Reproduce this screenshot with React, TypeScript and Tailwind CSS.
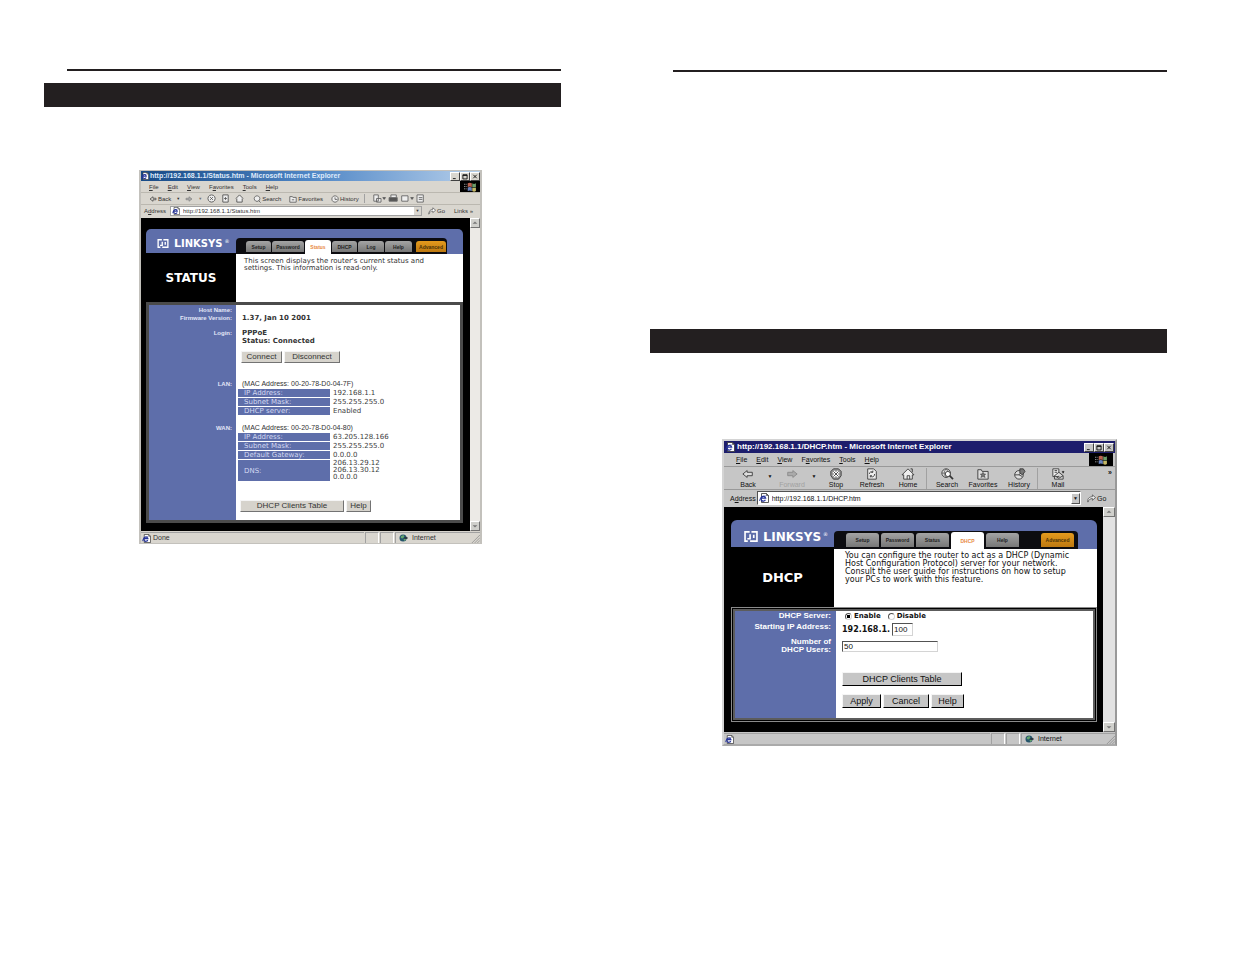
import type { ReactNode } from "react";

interface TabItem {
  name: string;
  width: string;
  active?: boolean;
  advanced?: boolean;
}

const statusTabs: TabItem[] = [
  { name: "Setup", width: "w-[25px]" },
  { name: "Password", width: "w-8" },
  { name: "Status", width: "w-[26px]", active: true },
  { name: "DHCP", width: "w-[25px]" },
  { name: "Log", width: "w-[26px]" },
  { name: "Help", width: "w-[27px]" },
  { name: "Advanced", width: "w-[30px] ml-[3px]", advanced: true },
];

const dhcpTabs: TabItem[] = [
  { name: "Setup", width: "w-[33px]" },
  { name: "Password", width: "w-[33px]" },
  { name: "Status", width: "w-[33px]" },
  { name: "DHCP", width: "w-[33px]", active: true },
  { name: "Help", width: "w-[33px]" },
  { name: "Advanced", width: "w-[33px] ml-[20px]", advanced: true },
];

const menus = [
  ["", "F", "ile"],
  ["", "E", "dit"],
  ["", "V", "iew"],
  ["F", "a", "vorites"],
  ["", "T", "ools"],
  ["", "H", "elp"],
];

const Menu = () => (
  <div className="flex gap-[9px]">
    {menus.map(([before, key, after]) => (
      <button key={key + after}>
        {before}
        <u>{key}</u>
        {after}
      </button>
    ))}
  </div>
);

const PageIcon = ({ className }: { className: string }) => (
  <svg viewBox="0 0 10 10" className={`shrink-0 ${className}`}>
    <path d="M2.500 .5h5L9.500 2.500v7h-7z" fill="#fff" stroke="#333" strokeWidth=".8" />
    <path d="M7.500 .5v2h2" fill="none" stroke="#333" strokeWidth=".7" />
    <path d="M6.400 6.800A2.400 2.400 0 1 1 6.600 5.200H2" fill="none" stroke="#26349a" strokeWidth="1.300" />
    <path d="M.3 8C1 4.500 4 2.600 6.800 3" fill="none" stroke="#26349a" strokeWidth=".7" />
  </svg>
);

const WindowsFlag = ({ className }: { className: string }) => (
  <div className={`bg-black flex items-center justify-center ${className}`}>
    <svg viewBox="0 0 14 11" className="h-[10px] w-[14px]">
      <path d="M4.500 1.500c1.500-.8 3-.8 4.500 0v4c-1.500-.8-3-.8-4.500 0z" fill="#b96350" />
      <path d="M9.500 1.500c1.500.8 2.500.8 4 0v4c-1.500.8-2.500.8-4 0z" fill="#6d9d69" />
      <path d="M4.500 6c1.500-.8 3-.8 4.500 0v4c-1.500-.8-3-.8-4.500 0z" fill="#6a83bd" />
      <path d="M9.500 6c1.500.8 2.500.8 4 0v4c-1.500.8-2.500.8-4 0z" fill="#c5b867" />
      <path d="M.5 2.500H4M.5 5H4M.5 7.500H4" stroke="#aaa" strokeWidth="1" strokeDasharray="1 .7" />
    </svg>
  </div>
);

const WindowButtons = ({ className }: { className: string }) => (
  <div className="ml-auto flex">
    {["M2 8h4", "M2 2.500h6v6H2zM2 3.500h6", "M2.500 2.500l5 5M7.500 2.500l-5 5"].map((d, i) => (
      <button
        key={d}
        aria-label={["Minimize", "Maximize", "Close"][i]}
        className={`border border-t-white border-l-white border-r-neutral-700 border-b-neutral-700 ${className}`}
      >
        <svg viewBox="0 0 10 10" className="h-full w-full" fill="none" stroke="#111" strokeWidth="1.300">
          <path d={d} />
        </svg>
      </button>
    ))}
  </div>
);

const ScrollBar = ({ className }: { className: string }) => (
  <div className={`shrink-0 flex flex-col justify-between ${className}`}>
    {["M2 6l3-3 3 3z", "M2 4l3 3 3-3z"].map((d, i) => (
      <button
        key={d}
        aria-label={i === 0 ? "Scroll up" : "Scroll down"}
        className="h-[10px] bg-[#d0d0cc] border border-t-white border-l-white border-r-neutral-500 border-b-neutral-500"
      >
        <svg viewBox="0 0 10 10" className="h-full w-full" fill="#777">
          <path d={d} />
        </svg>
      </button>
    ))}
  </div>
);

const Globe = () => (
  <svg viewBox="0 0 10 9" className="h-2 w-[9px]">
    <circle cx="4.500" cy="4.500" r="4" fill="#25546b" />
    <path d="M2 2.500L5 1l1 2-2 2-2-.5zM5 6l2-1 1 1-2 2z" fill="#64a56e" />
    <path d="M6 3.500h3.500v2H6z" fill="#29323c" />
  </svg>
);

const StatusBar = ({ text, right }: { text: string; right: string }) => (
  <div className="h-3 flex gap-px pt-px text-[7px] leading-[10px] font-['Liberation_Sans',sans-serif]">
    <div className="flex items-center gap-0.5 flex-1 pl-px border-t border-neutral-400">
      <PageIcon className="size-[9px]" />
      {text}
    </div>
    <div className="w-[14px] border-t border-l border-neutral-400 border-r border-r-white" />
    <div className="w-[14px] border-t border-l border-neutral-400 border-r border-r-white" />
    <div className={`flex items-center gap-1 pl-[3px] border-t border-l border-neutral-400 ${right}`}>
      <Globe />
      Internet
      <svg viewBox="0 0 10 10" className="ml-auto size-[9px]" stroke="#888" strokeWidth=".8">
        <path d="M1 10l9-9M4 10l6-6M7 10l3-3" />
      </svg>
    </div>
  </div>
);

const Logo = ({ mark, big, small }: { mark: string; big: string; small: string }) => (
  <div className="flex items-center gap-[5px] text-white font-bold">
    <svg viewBox="0 0 15 12" className={`shrink-0 ${mark}`} fill="none" stroke="#fff" strokeWidth="1.800">
      <path d="M6 1H1v10h3M6.500 3.500v5H3.500" />
      <path d="M8 1h6v10H6.500M10.500 4v3.500" />
    </svg>
    <span className={`leading-none ${big}`}>
      L<span className={small}>INKSYS</span>
    </span>
    <span className="text-[5px] leading-none -ml-[3px] mb-1 font-normal">®</span>
  </div>
);

const Tabs = ({ items, className, tabHeight }: { items: TabItem[]; className: string; tabHeight: string }) => (
  <nav className={`flex items-end bg-[#0c0c10] rounded-t-[4px] ${className}`}>
    {items.map((tab) => (
      <a
        key={tab.name}
        href="#"
        className={`flex items-center justify-center rounded-t-[3px] font-bold text-[5px] leading-[6px] font-['Liberation_Sans',sans-serif] ${tab.width} ${
          tab.active
            ? "bg-white text-[#e88a45] self-stretch"
            : tab.advanced
              ? `bg-linear-to-b from-[#e49a1d] to-[#bd7911] text-[#4b3207] mb-0.5 ${tabHeight}`
              : `bg-linear-to-b from-[#a4a4a4] to-[#777] text-[#222] mb-0.5 ${tabHeight}`
        }`}
      >
        {tab.name}
      </a>
    ))}
  </nav>
);

const Button = ({ className, children }: { className: string; children: ReactNode }) => (
  <button
    className={`border border-t-neutral-100 border-l-neutral-100 flex items-center justify-center font-['Liberation_Sans',sans-serif] ${className}`}
  >
    {children}
  </button>
);

const InfoTable = ({ rows }: { rows: [string, string[]][] }) => (
  <table className="border-separate border-spacing-x-0 border-spacing-y-px text-[7px] leading-[8px] text-neutral-700">
    <tbody>
      {rows.map(([name, values]) => (
        <tr key={name}>
          <th className="w-[92px] p-0 pl-[6px] bg-[#5e6eaa] text-[#d3d9f2] text-left font-normal">{name}</th>
          <td className={`p-0 pl-[3px] ${values.length > 1 ? "leading-[7px]" : ""}`}>
            {values.map((value) => (
              <div key={value}>{value}</div>
            ))}
          </td>
        </tr>
      ))}
    </tbody>
  </table>
);

const StatusRow = ({ labels, className, children }: { labels: string[]; className: string; children: ReactNode }) => (
  <div className="flex text-[7px] leading-[8px]">
    <div
      className={`w-[87px] shrink-0 pr-1 bg-[#5e6eaa] text-[6px] text-[#e3e7f7] text-right font-bold leading-[8px] font-['Liberation_Sans',sans-serif] ${className}`}
    >
      {labels.map((label) => (
        <div key={label}>{label}</div>
      ))}
    </div>
    <div className={`flex-1 pl-[2px] ${className}`}>{children}</div>
  </div>
);

const smallIcons = [
  "M5 1a4 4 0 1 0 .1 0M3.500 3.500l3 3M6.500 3.500l-3 3",
  "M2 1h6v8H2zM3.500 5h3M5 3.500v3",
  "M1 5l4-4 4 4M2 5v4h6V5",
];

const StatusWindow = () => (
  <section className="mt-[63px] ml-[95px] mr-[79px] border-x-2 border-y border-[#c3c1bc] bg-[#d9d6cf] text-[#333] font-['DejaVu_Sans',Verdana,sans-serif]">
    <header className="h-[10px] flex items-center gap-px bg-linear-to-r from-[#174a86] via-[#4f86c5] to-[#b6cfea] text-white">
      <PageIcon className="size-[8px]" />
      <span className="font-bold text-[7px] leading-[10px] text-[#dfeafa] font-['Liberation_Sans',sans-serif] whitespace-nowrap">
        http://192.168.1.1/Status.htm - Microsoft Internet Explorer
      </span>
      <WindowButtons className="w-[10px] h-[9px] bg-[#d9d6cf]" />
    </header>
    <div className="font-['Liberation_Sans',sans-serif] text-[6px] leading-[10px]">
      <div className="h-3 flex items-center pl-2 border-b border-[#bbb8b0]">
        <Menu />
        <WindowsFlag className="ml-auto w-5 h-[11px]" />
      </div>
      <div className="h-3 flex items-center pl-2 gap-[5px] border-b border-[#bbb8b0]">
        <button className="flex items-center gap-px">
          <svg viewBox="0 0 10 8" className="w-2 h-[6px]" fill="none" stroke="#444" strokeWidth="1">
            <path d="M5 1L1 4l4 3V5h4V3H5z" />
          </svg>
          Back
        </button>
        <span className="text-[4px]">▼</span>
        <svg viewBox="0 0 10 8" className="w-2 h-[6px]" fill="#aaa" stroke="#888">
          <path d="M5 1l4 3-4 3V5H1V3h4z" />
        </svg>
        <span className="text-[4px] text-neutral-500">▼</span>
        {smallIcons.map((d) => (
          <svg key={d} viewBox="0 0 10 10" className="size-[9px]" fill="#eee" stroke="#555" strokeWidth="1">
            <path d={d} />
          </svg>
        ))}
        <div className="flex gap-2 pl-1">
          {["Search", "Favorites", "History"].map((name, i) => (
            <button key={name} className="flex items-center gap-px">
              <svg viewBox="0 0 10 10" className="size-2" fill="#eee" stroke="#555" strokeWidth="1">
                <path
                  d={["M5 1a3.500 3.500 0 1 0 .1 0M7 7l2.500 2.500", "M1 2h3l1 1h4v6H1zM3.500 6h3", "M5 1a4 4 0 1 0 .1 0M5 3v2.500h3"][i]}
                />
              </svg>
              {name}
            </button>
          ))}
        </div>
        <span className="h-[9px] w-px bg-neutral-400" />
        <svg viewBox="0 0 60 10" className="w-[58px] h-[9px]" fill="#eee" stroke="#666" strokeWidth="1">
          <path d="M2 1h5v7H2zM5 5h5v4H5z" />
          <path d="M12 4l1.500 2L15 4z" fill="#333" />
          <path d="M19 4h9v4h-9z" fill="#555" />
          <path d="M21 1h6v3h-6z" />
          <path d="M33 2h7v6h-7z" />
          <path d="M43 4l1.500 2L46 4z" fill="#333" />
          <path d="M50 1h7v8h-7zM52 4h4M52 6h4" />
        </svg>
      </div>
      <div className="h-[13px] flex items-center pl-[3px] pb-px">
        <label htmlFor="status-address">
          A<u>d</u>dress
        </label>
        <div className="ml-1 flex flex-1 items-center gap-[3px] h-[10px] pl-px bg-white border border-neutral-400">
          <PageIcon className="size-[8px]" />
          <input id="status-address" defaultValue="http://192.168.1.1/Status.htm" className="min-w-0 flex-1 outline-none" />
          <button aria-label="Show addresses" className="w-[7px] h-2 bg-[#d9d6cf] text-[4px] leading-[8px]">
            ▼
          </button>
        </div>
        <button className="flex items-center gap-px w-[32px] pl-[6px]">
          <svg viewBox="0 0 10 10" className="size-2" fill="#fff" stroke="#666">
            <path d="M1 9c0-4 2-6 5-6V1l3.500 3L6 7V5C4 5 2 6 1 9z" />
          </svg>
          Go
        </button>
        <span className="w-[26px]">Links »</span>
      </div>
    </div>
    <div className="flex">
      <div className="flex-1 bg-black pt-[11px] pb-2 pl-[5px] pr-[7px]">
        <div className="h-[25px] flex items-end bg-[#5e6eaa] rounded-t-[5px]">
          <div className="w-[90px] shrink-0 self-stretch pl-[11px] pt-[4px] flex items-center border-b border-black">
            <Logo mark="w-3 h-[9px]" big="text-[11px]" small="text-[10px]" />
          </div>
          <Tabs items={statusTabs} className="h-4 gap-px pl-[10px] pr-px pt-0.5" tabHeight="h-[11px]" />
        </div>
        <div className="flex h-12">
          <h1 className="w-[90px] shrink-0 flex items-center justify-center text-white font-bold text-[12px]">STATUS</h1>
          <p className="flex-1 bg-white pt-1 pl-2 text-[7px] leading-[7px]">
            This screen displays the router's current status and
            <br />
            settings. This information is read-only.
          </p>
        </div>
        <div className="border-[3px] border-[#4b4b4b] bg-white">
          <StatusRow labels={["Host Name:", "Firmware Version:"]} className="pt-px">
            <p className="pt-2 pl-1 font-bold">1.37, Jan 10 2001</p>
          </StatusRow>
          <StatusRow labels={["Login:"]} className="pt-[7px] pb-[13px]">
            <p className="pl-1 font-bold">PPPoE</p>
            <p className="pl-1 font-bold">Status: Connected</p>
            <div className="mt-[6px] pl-[3px] flex gap-[2px]">
              <Button className="w-[41px] h-3 text-[8px] bg-[#d6d3cc] border-r-neutral-500 border-b-neutral-500">Connect</Button>
              <Button className="w-14 h-3 text-[8px] bg-[#d6d3cc] border-r-neutral-500 border-b-neutral-500">Disconnect</Button>
            </div>
          </StatusRow>
          <StatusRow labels={["LAN:"]} className="pt-1">
            <p className="pl-1 font-['Liberation_Sans',sans-serif]">(MAC Address: 00-20-78-D0-04-7F)</p>
            <InfoTable
              rows={[
                ["IP Address:", ["192.168.1.1"]],
                ["Subnet Mask:", ["255.255.255.0"]],
                ["DHCP server:", ["Enabled"]],
              ]}
            />
          </StatusRow>
          <StatusRow labels={["WAN:"]} className="pt-2 pb-2">
            <p className="pl-1 font-['Liberation_Sans',sans-serif]">(MAC Address: 00-20-78-D0-04-80)</p>
            <InfoTable
              rows={[
                ["IP Address:", ["63.205.128.166"]],
                ["Subnet Mask:", ["255.255.255.0"]],
                ["Default Gateway:", ["0.0.0.0"]],
                ["DNS:", ["206.13.29.12", "206.13.30.12", "0.0.0.0"]],
              ]}
            />
            <div className="mt-[18px] pl-[2px] flex gap-[2px]">
              <Button className="w-[104px] h-3 text-[8px] bg-[#d6d3cc] border-r-neutral-500 border-b-neutral-500">
                DHCP Clients Table
              </Button>
              <Button className="w-[25px] h-3 text-[8px] bg-[#d6d3cc] border-r-neutral-500 border-b-neutral-500">Help</Button>
            </div>
          </StatusRow>
        </div>
      </div>
      <ScrollBar className="w-[10px] bg-[#eceae6]" />
    </div>
    <StatusBar text="Done" right="w-[85px]" />
  </section>
);

const ToolButton = ({ name, faded, children }: { name: string; faded?: boolean; children: ReactNode }) => (
  <button className={`w-9 shrink-0 flex flex-col items-center ${faded ? "text-neutral-400" : ""}`}>
    <svg viewBox="0 0 16 14" className="w-[14px] h-3" fill="none" stroke={faded ? "#888" : "#333"} strokeWidth="1">
      {children}
    </svg>
    {name}
  </button>
);

const Caret = () => <span className="w-2 shrink-0 pt-1 text-center text-[5px]">▼</span>;

const FieldRow = ({ label, className, children }: { label: ReactNode; className: string; children: ReactNode }) => (
  <div className="flex">
    <div
      className={`w-[101px] shrink-0 pr-[5px] bg-[#5e6eaa] text-white text-right text-[8px] font-bold leading-[8px] font-['Liberation_Sans',sans-serif] ${className}`}
    >
      {label}
    </div>
    <div className={`flex-1 pl-[6px] flex items-center font-bold ${className}`}>{children}</div>
  </div>
);

const Radio = ({ label, checked }: { label: string; checked?: boolean }) => (
  <label className="flex items-center gap-[2px] ml-[3px] mr-[4px] text-[7px]">
    <input
      type="radio"
      name="dhcp-server"
      defaultChecked={checked}
      className="appearance-none size-[7px] rounded-full border border-neutral-600 border-r-neutral-300 border-b-neutral-300 bg-white checked:bg-[radial-gradient(#000_40%,#fff_50%)]"
    />
    {label}
  </label>
);

const DhcpWindow = () => (
  <section className="mt-[86px] ml-[72px] mr-[50px] border-2 border-[#d4d4d4] border-r-[#999] border-b-[#aaa] bg-[#c6c6c6] text-[#111] font-['DejaVu_Sans',Verdana,sans-serif]">
    <header className="h-3 flex items-center gap-[2px] pl-px pr-px bg-[#1d1d6c] text-white">
      <PageIcon className="size-[10px]" />
      <span className="font-bold text-[8px] leading-[12px] font-['Liberation_Sans',sans-serif] whitespace-nowrap">
        http://192.168.1.1/DHCP.htm - Microsoft Internet Explorer
      </span>
      <WindowButtons className="w-[10px] h-[9px] bg-[#c6c6c6]" />
    </header>
    <div className="font-['Liberation_Sans',sans-serif] text-[7px] leading-[9px]">
      <div className="h-[14px] flex items-center pl-3 pr-0.5 border-b border-[#999]">
        <Menu />
        <WindowsFlag className="ml-auto w-6 h-[13px]" />
      </div>
      <div className="h-[23px] flex pl-[6px] pt-px border-b border-[#999]">
        <ToolButton name="Back">
          <path d="M7 3L2 7l5 4V9h6V5H7z" fill="#ddd" />
        </ToolButton>
        <Caret />
        <ToolButton name="Forward" faded>
          <path d="M9 3l5 4-5 4V9H3V5h6z" fill="#aaa" />
        </ToolButton>
        <Caret />
        <ToolButton name="Stop">
          <path d="M5 1h6l3 3v5l-3 4H5L2 9V4z" fill="#999" />
          <path d="M5 4l6 6M11 4l-6 6" stroke="#fff" strokeWidth="3" />
          <path d="M5 4l6 6M11 4l-6 6" />
        </ToolButton>
        <ToolButton name="Refresh">
          <path d="M3 1h7l3 3v9H3z" fill="#eee" />
          <path d="M5 7c0-3 3-3 4-2M9 3v2H7M11 7c0 4-4 4-5 2M6 11V9h2" />
        </ToolButton>
        <ToolButton name="Home">
          <path d="M1 8l7-7 7 7H13v5H3V8z" fill="#eee" />
          <path d="M7 13V9h3v4M11 1h2v4" />
        </ToolButton>
        <span className="w-[3px] border-l border-neutral-400" />
        <ToolButton name="Search">
          <circle cx="7" cy="6" r="5" fill="#ddd" />
          <path d="M2 6h10M7 1c-3 3-3 7 0 10M7 1c3 3 3 7 0 10" strokeWidth=".6" />
          <circle cx="9" cy="7" r="3" fill="#fff" />
          <path d="M11 9l4 4" strokeWidth="2" />
        </ToolButton>
        <ToolButton name="Favorites">
          <path d="M2 2h4l1 2h7v9H2z" fill="#ddd" />
          <path d="M8 5l1 2h2L9.500 9l1 2L8 10l-2.500 1 1-2L5 7h2z" fill="#777" strokeWidth=".6" />
        </ToolButton>
        <ToolButton name="History">
          <circle cx="8" cy="8" r="5" fill="#ddd" />
          <path d="M3 8h5l5-6M8 8l4 2" />
          <path d="M9 1h4l2 3-3 4-3-2z" fill="#777" />
        </ToolButton>
        <span className="w-[3px] border-l border-neutral-400" />
        <ToolButton name="Mail">
          <path d="M2 1h7v9H2z" fill="#eee" />
          <path d="M4 3h3M4 5h3" />
          <path d="M4 13V9l5-4 5 4v4zM4 9l5 3 5-3" fill="#ddd" />
          <path d="M13 4l1 2 1-2z" fill="#333" />
        </ToolButton>
        <span className="ml-auto pr-[3px] font-bold">»</span>
      </div>
      <div className="h-[17px] flex items-center pl-[6px] pb-px">
        <label htmlFor="dhcp-address">
          A<u>d</u>dress
        </label>
        <div className="ml-px flex flex-1 items-center gap-[3px] h-[14px] pl-px bg-white border border-neutral-600 border-r-white border-b-white">
          <PageIcon className="size-[10px]" />
          <input id="dhcp-address" defaultValue="http://192.168.1.1/DHCP.htm" className="min-w-0 flex-1 outline-none" />
          <button
            aria-label="Show addresses"
            className="w-[9px] h-[11px] bg-[#c6c6c6] border border-r-neutral-600 border-b-neutral-600 border-t-white border-l-white text-[5px] leading-[9px]"
          >
            ▼
          </button>
        </div>
        <button className="flex items-center gap-px w-[34px] pl-[6px]">
          <svg viewBox="0 0 10 10" className="size-[9px]" fill="#eee" stroke="#444" strokeWidth=".8">
            <path d="M1 9c-1-4 2-6 5-6V1l3.500 3L6 7V5C4 5 2 6 1 9z" />
          </svg>
          Go
        </button>
      </div>
    </div>
    <div className="flex">
      <div className="flex-1 bg-black pt-[13px] pb-[10px] pl-[7px] pr-[6px]">
        <div className="h-[29px] flex items-end bg-[#5e6eaa] rounded-t-[6px]">
          <div className="w-[103px] shrink-0 self-stretch pl-[13px] pt-[5px] flex items-center border-b-2 border-black">
            <Logo mark="w-[14px] h-[11px]" big="text-[13px]" small="text-[12px]" />
          </div>
          <Tabs items={dhcpTabs} className="h-[18px] gap-0.5 pl-3 pr-1 pt-px" tabHeight="h-[14px]" />
        </div>
        <div className="flex h-[58px]">
          <h1 className="w-[103px] shrink-0 flex items-center justify-center text-white font-bold text-[13px]">DHCP</h1>
          <p className="flex-1 bg-white pt-[3px] pl-[11px] text-[8px] leading-[8px]">
            You can configure the router to act as a DHCP (Dynamic
            <br />
            Host Configuration Protocol) server for your network.
            <br />
            Consult the user guide for instructions on how to setup
            <br />
            your PCs to work with this feature.
          </p>
        </div>
        <div className="border border-[#8a8a8a] p-px">
          <form className="border-2 border-[#5c5c5c] bg-white text-[8px] leading-[8px]" onSubmit={(e) => e.preventDefault()}>
            <FieldRow label="DHCP Server:" className="pt-px">
              <Radio label="Enable" checked />
              <Radio label="Disable" />
            </FieldRow>
            <FieldRow label={<label htmlFor="start-ip">Starting IP Address:</label>} className="pt-[3px]">
              192.168.1.
              <input
                id="start-ip"
                defaultValue="100"
                className="ml-0.5 w-[21px] h-[13px] pl-px border border-neutral-600 border-r-neutral-300 border-b-neutral-300 font-normal text-[8px] font-['Liberation_Sans',sans-serif]"
              />
            </FieldRow>
            <FieldRow
              label={
                <label htmlFor="dhcp-users">
                  Number of
                  <br />
                  DHCP Users:
                </label>
              }
              className="pt-0.5"
            >
              <input
                id="dhcp-users"
                defaultValue="50"
                className="w-24 h-[11px] pl-px border border-neutral-600 border-r-neutral-300 border-b-neutral-300 font-normal text-[8px] font-['Liberation_Sans',sans-serif]"
              />
            </FieldRow>
            <div className="flex">
              <div className="w-[101px] shrink-0 bg-[#5e6eaa]" />
              <div className="flex-1 pt-[18px] pb-[10px] pl-[6px]">
                <Button className="w-[120px] h-[14px] text-[9px] bg-[#c6c6c6] border-r-black border-b-black">
                  DHCP Clients Table
                </Button>
                <div className="mt-2 flex gap-0.5">
                  <Button className="w-[39px] h-[14px] text-[9px] bg-[#c6c6c6] border-r-black border-b-black">Apply</Button>
                  <Button className="w-[46px] h-[14px] text-[9px] bg-[#c6c6c6] border-r-black border-b-black">Cancel</Button>
                  <Button className="w-[33px] h-[14px] text-[9px] bg-[#c6c6c6] border-r-black border-b-black">Help</Button>
                </div>
              </div>
            </div>
          </form>
        </div>
      </div>
      <ScrollBar className="w-3 bg-[#e2e2e2]" />
    </div>
    <StatusBar text="" right="w-[94px]" />
  </section>
);

const App = () => {
  return (
    <main className="min-h-screen bg-white grid grid-cols-2 gap-[89px] pl-11 pr-[68px] pb-10">
      <div className="pt-[69px]">
        <hr className="ml-[23px] h-0.5 border-0 bg-[#231f20]" />
        <div className="mt-3 h-6 bg-[#231f20]" />
        <StatusWindow />
      </div>
      <div className="pt-[70px]">
        <hr className="ml-[23px] h-0.5 border-0 bg-[#231f20]" />
        <div className="mt-[257px] h-6 bg-[#231f20]" />
        <DhcpWindow />
      </div>
    </main>
  );
};

export default App;
